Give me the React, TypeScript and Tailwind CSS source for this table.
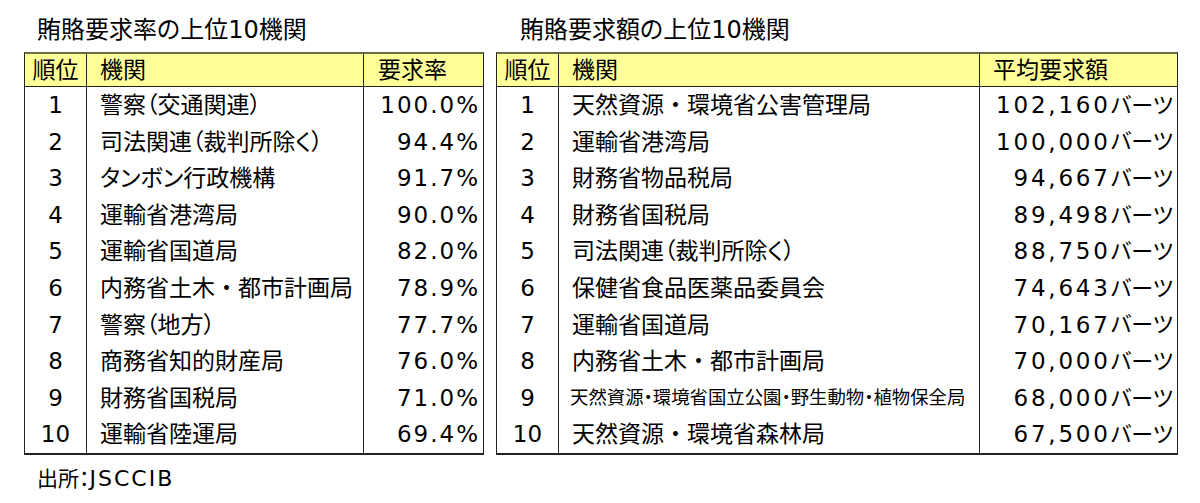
const rateRows: [string, string][] = [
  ["警察（交通関連）", "100.0%"],
  ["司法関連（裁判所除く）", "94.4%"],
  ["タンボン行政機構", "91.7%"],
  ["運輸省港湾局", "90.0%"],
  ["運輸省国道局", "82.0%"],
  ["内務省土木・都市計画局", "78.9%"],
  ["警察（地方）", "77.7%"],
  ["商務省知的財産局", "76.0%"],
  ["財務省国税局", "71.0%"],
  ["運輸省陸運局", "69.4%"],
];

const amountRows: [string, string][] = [
  ["天然資源・環境省公害管理局", "102,160"],
  ["運輸省港湾局", "100,000"],
  ["財務省物品税局", "94,667"],
  ["財務省国税局", "89,498"],
  ["司法関連（裁判所除く）", "88,750"],
  ["保健省食品医薬品委員会", "74,643"],
  ["運輸省国道局", "70,167"],
  ["内務省土木・都市計画局", "70,000"],
  ["天然資源・環境省国立公園・野生動物・植物保全局", "68,000"],
  ["天然資源・環境省森林局", "67,500"],
];

// 中黒だけは全角幅のまま残す（長い行は詰める）
function Name({ text, tight = false }: { text: string; tight?: boolean }) {
  if (tight) return <>{text}</>;
  const parts = text.split("・");
  return (
    <>
      {parts.map((p, i) => (
        <span key={i}>
          {i > 0 && <span className="[font-feature-settings:normal]">・</span>}
          {p}
        </span>
      ))}
    </>
  );
}

function RateTable() {
  return (
    <div className="w-[460px] border-x border-t-2 border-b-2 border-x-[#222] border-t-[#6b6b4a] border-b-[#222]">
      <div className="flex h-[33px] border-b border-[#222] bg-[#ffff99] text-[23px] leading-[32px]">
        <div className="w-[62px] shrink-0 border-r border-[#222] text-center">順位</div>
        <div className="w-[277px] shrink-0 border-r border-[#222] pl-[13px]">機関</div>
        <div className="flex-1 pl-[14px]">要求率</div>
      </div>
      {rateRows.map(([name, rate], i) => (
        <div key={name} className="flex h-[36.6px] items-center text-[23px]">
          <div className="flex h-full w-[62px] shrink-0 items-center justify-center border-r border-[#222]">{i + 1}</div>
          <div className="flex h-full w-[277px] shrink-0 items-center border-r border-[#222] pl-[13px] whitespace-nowrap">
            <Name text={name} />
          </div>
          <div className="flex h-full flex-1 items-center justify-end pr-[3px] tracking-[2px]">{rate}</div>
        </div>
      ))}
    </div>
  );
}

function AmountTable() {
  return (
    <div className="w-[682px] border-x border-t-2 border-b-2 border-x-[#222] border-t-[#6b6b4a] border-b-[#222]">
      <div className="flex h-[33px] border-b border-[#222] bg-[#ffff99] text-[23px] leading-[32px]">
        <div className="w-[62px] shrink-0 border-r border-[#222] text-center">順位</div>
        <div className="w-[421px] shrink-0 border-r border-[#222] pl-[13px]">機関</div>
        <div className="flex-1 pl-[13px]">平均要求額</div>
      </div>
      {amountRows.map(([name, amount], i) => (
        <div key={name} className="flex h-[36.6px] items-center text-[23px]">
          <div className="flex h-full w-[62px] shrink-0 items-center justify-center border-r border-[#222]">{i + 1}</div>
          <div
            className={`flex h-full w-[421px] shrink-0 items-center border-r border-[#222] whitespace-nowrap ${
              i === 8 ? "pl-[11px] text-[18.4px]" : "pl-[13px]"
            }`}
          >
            <Name text={name} tight={i === 8} />
          </div>
          <div className="flex h-full flex-1 items-center justify-end pr-[4px]">
            <span className="tracking-[2.8px]">{amount}</span>
            <span className="text-[22px]">バーツ</span>
          </div>
        </div>
      ))}
    </div>
  );
}

export default function App() {
  return (
    <div className="h-[503px] w-[1200px] bg-white font-['DejaVu_Sans','Noto_Sans_CJK_JP',sans-serif] text-black [font-feature-settings:'palt']">
      <div className="ml-[24px] flex gap-[12px]">
        <div>
          <div className="h-[52px] pl-[13px] pt-[16px] text-[24px] leading-[28px]">賄賂要求率の上位10機関</div>
          <RateTable />
          <div className="pl-[13px] pt-[12px] text-[21px] leading-[24px]">
            出所：<span className="text-[22px] tracking-[2px]">JSCCIB</span>
          </div>
        </div>
        <div>
          <div className="h-[52px] pl-[24px] pt-[16px] text-[24px] leading-[28px]">賄賂要求額の上位10機関</div>
          <AmountTable />
        </div>
      </div>
    </div>
  );
}
